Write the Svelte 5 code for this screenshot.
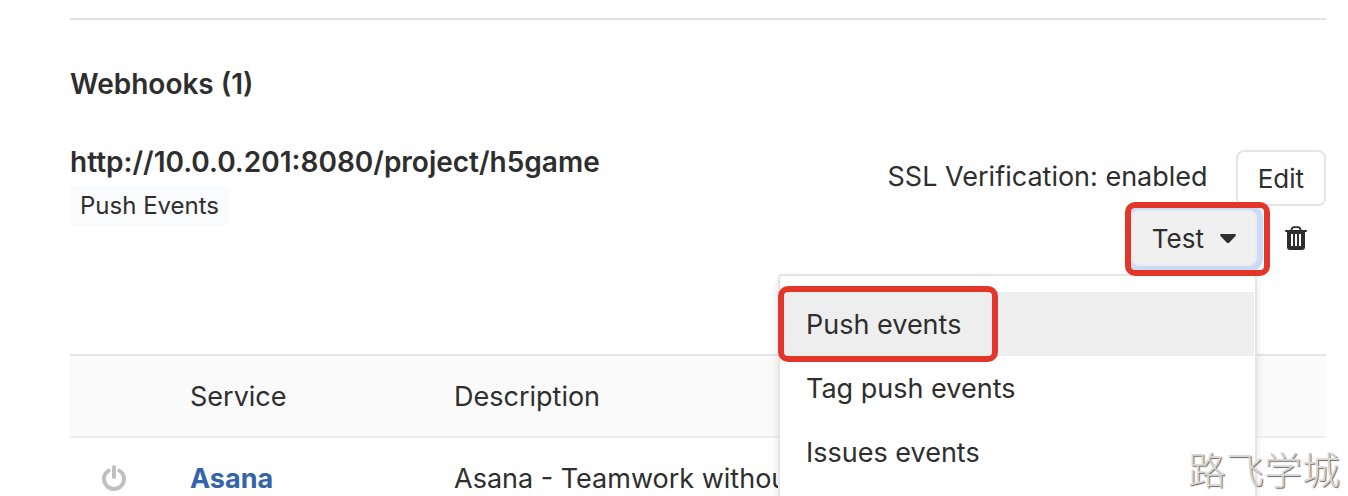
<script>
  const events = ['Push events', 'Tag push events', 'Issues events'];
  const services = [{ name: 'Asana', description: 'Asana - Teamwork without' }];
</script>

<main class="page">
  <section class="webhooks">
    <h2>Webhooks (1)</h2>
    <div class="hook">
      <div class="info">
        <strong class="url">http://10.0.0.201:8080/project/h5game</strong>
        <span class="tag">Push Events</span>
      </div>
      <div class="side">
        <div class="line">
          <span class="ssl">SSL Verification: enabled</span>
          <button class="btn">Edit</button>
        </div>
        <div class="line actions">
          <div class="dropdown">
            <button class="btn test" aria-expanded="true">
              Test
              <svg width="16" height="10" viewBox="0 0 16 10" aria-hidden="true">
                <path d="M1.6 0h12.8c1.3 0 2 1 1.1 2L9.3 8.400q-1.300 1.200-2.600 0L.5 2C-.4 1 .3 0 1.600 0z" fill="#2e2e2e" />
              </svg>
            </button>
            <span class="frame frame-test"></span>
            <ul class="menu">
              {#each events as event, i}
                <li>
                  <button class="item" class:active={i === 0}>{event}</button>
                  {#if i === 0}<span class="frame frame-push"></span>{/if}
                </li>
              {/each}
            </ul>
          </div>
          <button class="trash" aria-label="Delete">
            <svg width="22" height="24" viewBox="0 0 22 24" aria-hidden="true">
              <path d="M6.500 5V3.500Q7 1.100 9 1.100h4Q15 1.100 15.500 3.500V5" fill="none" stroke="#2e2e2e" stroke-width="1.800" />
              <path d="M1 4h20q1 0 1 1t-1 1H1q-1 0-1-1t1-1z" fill="#2e2e2e" />
              <path fill-rule="evenodd" d="M2 5h18v16q0 3-3 3H5q-3 0-3-3zM6 8v12h2V8zM10 8v12h2V8zM14 8v12h2V8z" fill="#2e2e2e" />
            </svg>
          </button>
        </div>
      </div>
    </div>
  </section>

  <table>
    <thead>
      <tr><th class="status"></th><th class="service">Service</th><th>Description</th></tr>
    </thead>
    <tbody>
      {#each services as service}
        <tr>
          <td class="status">
            <svg width="26" height="26" viewBox="0 0 26 26" role="img" aria-label="Inactive">
              <path d="M7.600 5.600A10 10 0 1 0 18.400 5.600M13 2v10" fill="none" stroke="#bfbfbf" stroke-width="4" stroke-linecap="round" />
            </svg>
          </td>
          <td><a href="#asana">{service.name}</a></td>
          <td>{service.description}</td>
        </tr>
      {/each}
    </tbody>
  </table>
  <span class="watermark">路飞学城</span>
</main>

<style>
  :global(body) {
    margin: 0;
    background: #fff;
  }
  .page {
    position: relative;
    box-sizing: border-box;
    height: 100vh;
    overflow: hidden;
    padding: 18px 22px 0 70px;
    font: 27px/32px Inter, sans-serif;
    color: #2e2e2e;
  }
  .webhooks {
    border-top: 2px solid #e1e1e1;
    padding-top: 48px;
  }
  h2 {
    margin: 0;
    font-size: 28px;
    line-height: 32px;
    font-weight: 600;
  }
  .hook {
    display: flex;
    justify-content: space-between;
    align-items: flex-start;
    padding-top: 46px;
    margin-bottom: 88px;
  }
  .info {
    display: flex;
    flex-direction: column;
    align-items: flex-start;
    gap: 8px;
  }
  .url {
    font-size: 28px;
    font-weight: 600;
  }
  .tag {
    padding: 4px 10px;
    border-radius: 4px;
    background: #fafbfd;
    font-size: 24px;
    line-height: 32px;
  }
  .side {
    display: flex;
    flex-direction: column;
    align-items: flex-end;
    gap: 4px;
    padding-top: 4px;
  }
  .line {
    display: flex;
    align-items: center;
    gap: 28px;
  }
  .ssl {
    padding-bottom: 2px;
  }
  button {
    font: inherit;
    color: inherit;
    border: 0;
    background: none;
    margin: 0;
  }
  .btn {
    display: flex;
    align-items: center;
    gap: 16px;
    height: 56px;
    padding: 2px 20px 0;
    border: 2px solid #e5e5e5;
    border-radius: 8px;
    background: #fff;
    font-size: 26px;
  }
  .actions {
    padding-right: 19px;
  }
  .dropdown {
    position: relative;
  }
  .test {
    padding: 2px 19px 0;
    background: #f0f0f0;
    border-color: #ececec;
    box-shadow: 0 0 0 6px #cbdaf6;
  }
  .frame {
    position: absolute;
    box-sizing: border-box;
    border: 6px solid #e23629;
    border-radius: 10px;
    pointer-events: none;
  }
  .frame-test {
    z-index: 1;
    inset: -8px -13px -10px -6px;
  }
  .frame-push {
    top: -6px;
    left: -2px;
    width: 220px;
    height: 76px;
  }
  .menu {
    position: absolute;
    top: 64px;
    right: 0;
    box-sizing: border-box;
    width: 479px;
    height: 300px;
    margin: 0;
    padding: 16px 1px 16px 0;
    list-style: none;
    background: #fff;
    border: 2px solid #e5e5e5;
    border-radius: 4px;
    box-shadow: 0 4px 8px rgba(0, 0, 0, 0.1);
  }
  .menu li {
    position: relative;
  }
  .item {
    display: block;
    width: 100%;
    height: 64px;
    padding: 2px 26px 0;
    text-align: left;
  }
  .active {
    background: #eee;
  }
  .trash {
    display: flex;
    padding: 0;
  }
  table {
    width: 100%;
    border-collapse: collapse;
    border-top: 2px solid #e5e5e5;
  }
  th,
  td {
    box-sizing: border-box;
    height: 82px;
    padding: 2px 0 0;
    text-align: left;
    font-weight: 400;
    border-bottom: 2px solid #eee;
  }
  th {
    background: #fafafa;
  }
  .status {
    width: 120px;
    padding: 0;
  }
  .status svg {
    display: block;
    margin-left: 31px;
  }
  .service {
    width: 264px;
  }
  a {
    color: #3465a8;
    font-weight: 700;
    text-decoration: none;
  }
  .watermark {
    position: absolute;
    right: 8px;
    bottom: 6px;
    z-index: 2;
    font: 300 38px/44px "Noto Sans CJK SC", sans-serif;
    color: #d8d8d8;
    text-shadow: 1px 1px 1px #6a6a6a;
  }
</style>
